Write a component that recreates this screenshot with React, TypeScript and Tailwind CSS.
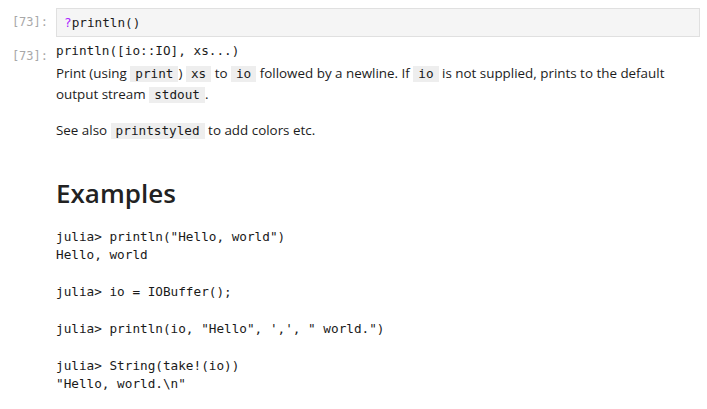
const mono = "font-['DejaVu_Sans_Mono',monospace] text-[12.7px]"

function Code({ children }: { children: React.ReactNode }) {
  return (
    <code className={`${mono} inline-block bg-[#eeeeee] px-[5px] leading-[16px] text-[#1a1a1a]`}>{children}</code>
  )
}

function Prompt({ className = '' }: { className?: string }) {
  return (
    <div className={`w-[56px] shrink-0 pr-[8px] text-right font-['DejaVu_Sans_Mono',monospace] text-[12px] leading-[17px] text-[#a8a8a8] ${className}`}>
      [73]:
    </div>
  )
}

const example = `julia> println("Hello, world")
Hello, world

julia> io = IOBuffer();

julia> println(io, "Hello", ',', " world.")

julia> String(take!(io))
"Hello, world.\\n"`

export default function App() {
  return (
    <div className="w-[707px] h-[409px] overflow-hidden bg-white pt-[8px] pr-[7px] font-['Open_Sans',sans-serif] text-[#1c1c1c]">
      <div className="flex">
        <Prompt className="pt-[6px]" />
        <div className={`flex-1 border border-[#e0e0e0] bg-[#f5f5f5] px-[7px] py-[5px] leading-[17px] ${mono}`}>
          <span className="text-[#aa22ff]">?</span>println()
        </div>
      </div>

      <div className="mt-[5px] flex">
        <Prompt className="pt-[6px]" />
        <div className="flex-1">
          <div className={`${mono} leading-[18px]`}>println([io::IO], xs...)</div>
          <p className="mt-[3px] text-[13.4px] leading-[21px]">
            Print (using <Code>print</Code>) <Code>xs</Code> to <Code>io</Code> followed by a newline. If{' '}
            <Code>io</Code> is not supplied, prints to the default output stream <Code>stdout</Code>.
          </p>
          <p className="mt-[15px] text-[13.4px] leading-[21px]">
            See also <Code>printstyled</Code> to add colors etc.
          </p>
          <h1 className="mt-[37px] text-[26px] font-semibold leading-[31px] text-[#222]">Examples</h1>
          <pre className={`mt-[19px] ${mono} leading-[18.4px] text-[#1a1a1a]`}>{example}</pre>
        </div>
      </div>
    </div>
  )
}
